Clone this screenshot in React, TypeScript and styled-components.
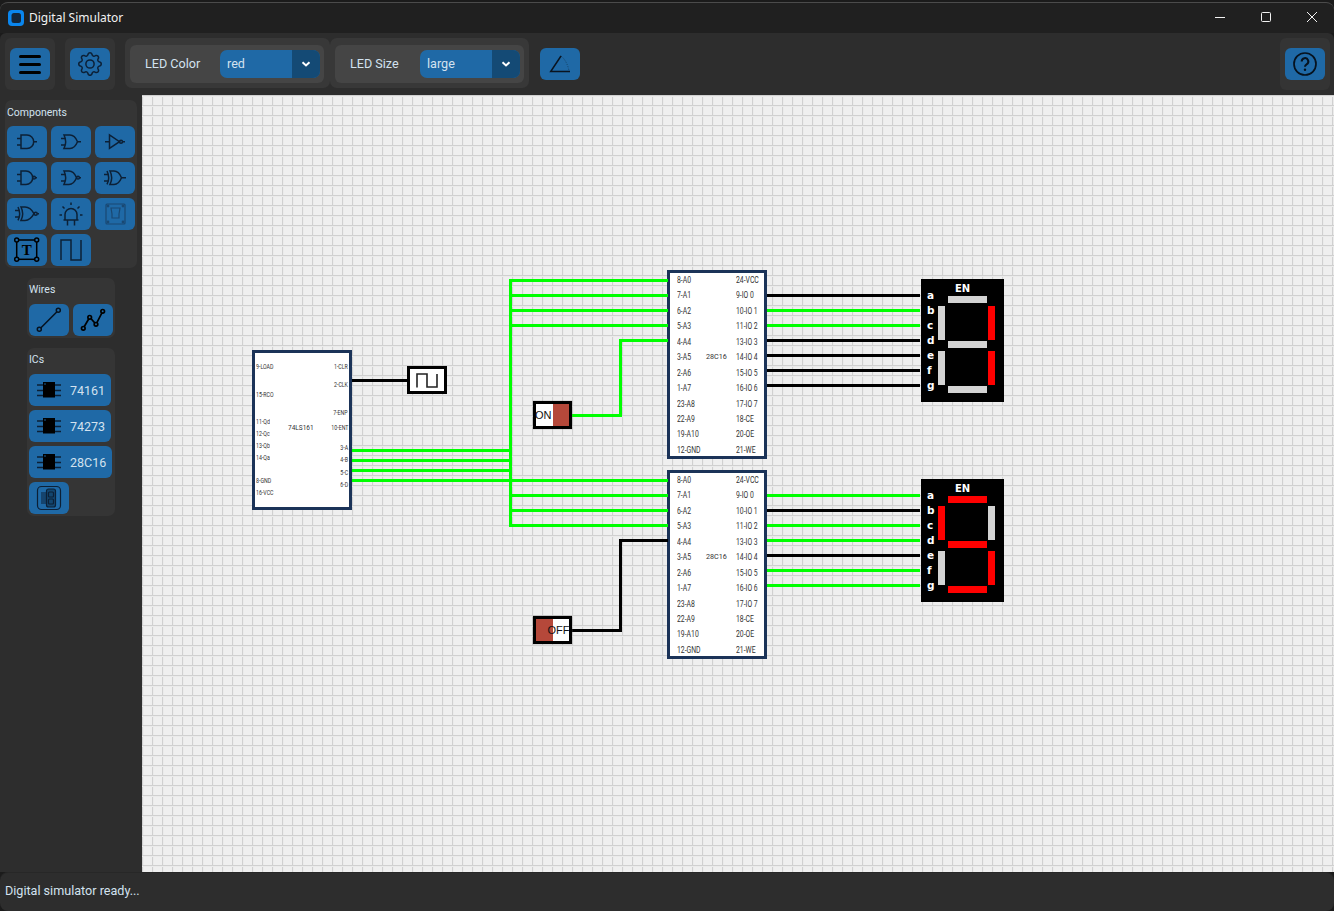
import React from 'react';
import styled, { createGlobalStyle } from 'styled-components';
import { BsGear } from 'react-icons/bs';

const ORIGIN_X = 142;
const ORIGIN_Y = 95;
const ICON = '#0c2036';
const GREEN = '#00ff00';

const GlobalStyle = createGlobalStyle`
  html, body, #root { margin: 0; padding: 0; height: 100%; background: #1b1b1b; overflow: hidden; }
  * { box-sizing: border-box; }
`;

const Win = styled.div`
  width: 1334px;
  height: 911px;
  display: flex;
  flex-direction: column;
  font-family: Roboto, "Liberation Sans", sans-serif;
  color: #d3e2ef;
  padding-top: 2px;
`;

const TitleBar = styled.div`
  height: 31px;
  flex: none;
  display: flex;
  align-items: center;
  padding: 0 0 1px 8px;
  background: #202020;
  border-top: 1px solid #4b4b4b;
  border-radius: 8px 8px 0 0;
  font-family: "Noto Sans", sans-serif;
  font-size: 12px;
  color: #f2f2f2;
`;

const AppTitle = styled.span`
  margin: 0 0 1px 5px;
`;

const WinControls = styled.div`
  margin: 0 -1px 1px auto;
  display: flex;
  height: 100%;
`;

const WinControl = styled.div`
  width: 46px;
  display: flex;
  align-items: center;
  justify-content: center;
`;

const ToolBar = styled.div`
  height: 62px;
  flex: none;
  display: flex;
  align-items: flex-start;
  padding: 5px 4px 0 5px;
  background: #2d2d2d;
  border-radius: 6px 6px 0 0;
`;

const ToolGroup = styled.div`
  width: 50px;
  height: 52px;
  margin-right: 10px;
  display: flex;
  align-items: center;
  justify-content: center;
  border-radius: 6px;
  background: #343434;
`;

const HelpGroup = styled(ToolGroup)`
  margin: 0 0 0 auto;
`;

const SettingOuter = styled.div<{ $w: number }>`
  width: ${p => p.$w}px;
  height: 50px;
  padding: 7px 0 5px 5px;
  border-radius: 7px;
  background: #383838;
`;

const SettingInner = styled.div<{ $w: number }>`
  width: ${p => p.$w}px;
  height: 38px;
  display: flex;
  align-items: center;
  padding-left: 15px;
  border-radius: 6px;
  background: #454545;
`;

const SettingLabel = styled.span<{ $w: number }>`
  width: ${p => p.$w}px;
  padding-bottom: 2px;
  font-size: 12.6px;
`;

const Select = styled.div`
  width: 100px;
  height: 28px;
  display: flex;
  align-items: center;
  padding-left: 7px;
  border-radius: 7px;
  overflow: hidden;
  background: #1f69a6;
  font-size: 12.6px;
`;

const SelectValue = styled.span`
  flex: 1;
  padding-bottom: 2px;
`;

const SelectArrow = styled.span`
  width: 28px;
  height: 28px;
  display: flex;
  align-items: center;
  justify-content: center;
  background: #144a75;
`;

const IconBtn = styled.div`
  width: 40px;
  height: 32px;
  flex: none;
  display: flex;
  align-items: center;
  justify-content: center;
  border-radius: 6px;
  background: #1f69a6;
  color: ${ICON};
  svg { display: block; }
`;

const AngleBtn = styled(IconBtn)`
  margin: 10px 0 0 11px;
`;

const Burger = styled.div`
  width: 22px;
  display: flex;
  flex-direction: column;
  gap: 5px;
`;

const BurgerBar = styled.span`
  height: 3px;
  border-radius: 2px;
  background: #000;
`;

const Main = styled.div`
  flex: 1;
  min-height: 0;
  display: flex;
`;

const SideBar = styled.div`
  width: 142px;
  flex: none;
  display: flex;
  flex-direction: column;
  align-items: flex-start;
  gap: 10px;
  padding-top: 5px;
  background: #2d2d2d;
`;

const Panel = styled.div<{ $w: number; $ml: number }>`
  width: ${p => p.$w}px;
  margin-left: ${p => p.$ml}px;
  padding: 0 2px 2px;
  border-radius: 7px;
  background: #353535;
`;

const PanelTitle = styled.div`
  height: 26px;
  line-height: 24px;
  font-size: 10.5px;
`;

const ComponentsTitle = styled(PanelTitle)`
  line-height: 25px;
`;

const PanelGrid = styled.div`
  display: grid;
  grid-template-columns: repeat(3, 40px);
  gap: 4px;
`;

const PanelRow = styled.div`
  display: flex;
  gap: 4px;
`;

const PanelColumn = styled.div`
  display: flex;
  flex-direction: column;
  align-items: flex-start;
  gap: 4px;
`;

const IcBtn = styled.div`
  height: 32px;
  display: flex;
  align-items: center;
  padding-right: 6px;
  border-radius: 6px;
  background: #1f69a6;
  font-size: 12.5px;
`;

const Canvas = styled.div`
  position: relative;
  flex: 1;
  overflow: hidden;
  background-color: #efefef;
  background-image:
    linear-gradient(#d0d0d0 1px, #ebebeb 1px, #ebebeb 2px, transparent 2px),
    linear-gradient(90deg, #d0d0d0 1px, #ebebeb 1px, #ebebeb 2px, transparent 2px);
  background-size: 10px 10px;
`;

const WireLayer = styled.svg`
  position: absolute;
  left: 0;
  top: 0;
`;

const Chip = styled.div<{ $x: number; $y: number; $h: number }>`
  position: absolute;
  left: ${p => p.$x - ORIGIN_X}px;
  top: ${p => p.$y - ORIGIN_Y}px;
  width: 100px;
  height: ${p => p.$h}px;
  background: #fff;
  border: 3px solid #1b3358;
  color: #333;
  font-family: Roboto, sans-serif;
`;

const RomGrid = styled.div`
  display: grid;
  grid-template-columns: 29px 30px 1fr;
  grid-auto-rows: 15.45px;
  padding: 0 0 0 7px;
  font-size: 9px;
  line-height: 14.5px;
  white-space: nowrap;
`;

const RomCell = styled.span<{ $col: number; $row: number }>`
  grid-column: ${p => p.$col};
  grid-row: ${p => p.$row};
  transform: scaleX(0.76);
  transform-origin: left center;
`;

const RomName = styled.span`
  grid-column: 2;
  grid-row: 6;
  font-size: 7.2px;
`;

const PinLabel = styled.span<{ $top: number; $right?: boolean }>`
  position: absolute;
  top: ${p => p.$top - 3}px;
  ${p => (p.$right ? 'right: 1px;' : 'left: 1px;')}
  transform: scaleX(0.7);
  transform-origin: ${p => (p.$right ? 'right' : 'left')} center;
  font-size: 7.5px;
  line-height: 7px;
  white-space: nowrap;
`;

const CounterName = styled.span`
  position: absolute;
  left: 33px;
  top: 71px;
  font-size: 6.5px;
  line-height: 8px;
`;

const ClockBox = styled.div`
  position: absolute;
  left: ${407 - ORIGIN_X}px;
  top: ${366 - ORIGIN_Y}px;
  width: 40px;
  height: 28px;
  display: flex;
  align-items: center;
  justify-content: center;
  background: #fff;
  border: 3px solid #000;
`;

const Toggle = styled.div<{ $y: number; $on: boolean }>`
  position: absolute;
  left: ${533 - ORIGIN_X}px;
  top: ${p => p.$y - ORIGIN_Y}px;
  width: 39px;
  height: 28px;
  display: flex;
  flex-direction: ${p => (p.$on ? 'row' : 'row-reverse')};
  border: 3px solid #000;
  box-shadow: 0 0 1px #777;
  background: #fff;
  font-family: "Liberation Sans", sans-serif;
  font-size: 11px;
  color: #111;
`;

const ToggleHalf = styled.span<{ $fill?: boolean }>`
  flex: 1;
  display: flex;
  align-items: center;
  position: relative;
  background: ${p => (p.$fill ? '#b5483a' : '#fff')};
`;

const ToggleText = styled.span<{ $left: number }>`
  position: absolute;
  z-index: 1;
  left: ${p => p.$left}px;
`;

const Display = styled.div<{ $y: number }>`
  position: absolute;
  left: ${921 - ORIGIN_X}px;
  top: ${p => p.$y - ORIGIN_Y}px;
  width: 83px;
  height: 123px;
  background: #000;
  color: #fff;
  font-family: "DejaVu Sans", sans-serif;
  font-weight: 700;
`;

const DisplayTitle = styled.span`
  position: absolute;
  left: 34px;
  top: 4px;
  font-size: 10px;
  line-height: 12px;
`;

const SegmentLabels = styled.div`
  position: absolute;
  left: 6px;
  top: 9px;
  display: flex;
  flex-direction: column;
  font-size: 10.5px;
  line-height: 15px;
`;

const Segments = styled.svg`
  position: absolute;
  left: 0;
  top: 0;
`;

const StatusBar = styled.div`
  height: 39px;
  flex: none;
  display: flex;
  align-items: center;
  padding: 0 0 3px 5px;
  background: #2d2d2d;
  border-top: 1px solid #272727;
  border-radius: 8px;
  font-size: 12.6px;
`;

const Gate = ({ children }: { children: React.ReactNode }) => (
  <svg width="40" height="32" viewBox="0 0 40 32" fill="none" stroke={ICON} strokeWidth="1.5">
    {children}
  </svg>
);

const AND = 'M14 9h6a6.7 6.7 0 0 1 0 13.4h-6z';
const OR = 'M13 9h6c3.5 0 6 3 7.5 6.7-1.5 3.7-4 6.7-7.5 6.7h-6c2-4 2-9.4 0-13.4z';
const STUBS = 'M10 12.5h4M10 19h4';

const GATES = [
  <Gate key="and"><path d={AND} /><path d={`${STUBS}M26.7 15.7H30`} /></Gate>,
  <Gate key="or"><path d={OR} /><path d={`${STUBS}M26.5 15.7H30`} /></Gate>,
  <Gate key="not"><path d="M14.5 9v13.4l10-6.7z" /><circle cx="26" cy="15.7" r="1.5" /><path d="M10 15.7h4.500M27.500 15.7H30" /></Gate>,
  <Gate key="nand"><path d="M14 9h5a6.700 6.700 0 0 1 0 13.400h-5z" /><circle cx="27" cy="15.700" r="1.400" /><path d={STUBS} /><path d="M28.400 15.700H30" /></Gate>,
  <Gate key="nor"><path d="M13 9h5c3.500 0 6 3 7.500 6.700-1.500 3.700-4 6.700-7.500 6.700h-5c2-4 2-9.400 0-13.400z" /><circle cx="27" cy="15.700" r="1.400" /><path d={STUBS} /><path d="M28.400 15.700H30" /></Gate>,
  <Gate key="xor"><path d="M15 9h4c3.500 0 6 3 7.500 6.700-1.500 3.700-4 6.700-7.500 6.700h-4c2-4 2-9.400 0-13.400z" /><path d="M12 9c2 4 2 9.400 0 13.400" /><path d="M9 12.500h4.500M9 19h4.500M26.500 15.700H31" /></Gate>,
  <Gate key="xnor"><path d="M14 9h4c4 0 7 3 9 6.700-2 3.700-5 6.700-9 6.700h-4c2-4 2-9.400 0-13.400z" /><path d="M11 9c2 4 2 9.400 0 13.400" /><circle cx="28.700" cy="15.700" r="1.500" /><path d="M8 12.500h4.500M8 19h4.500M30.200 15.700H32" /></Gate>,
  <Gate key="led"><path d="M14 22v-5.500a6 6 0 0 1 12 0V22zM12.500 22h15M16.500 22v5.500M23.500 22v5.500M8.500 17h2.500M29 17h2.500M11.500 8.500l2 2M28.500 8.500l-2 2M20 4.500v2.500" /></Gate>,
  <Gate key="switch">
    <g stroke="#1a4872" strokeWidth="1.200"><rect x="11" y="6" width="19" height="20" rx="1" /><path d="M16 10h9l-1 6v4h-7v-4z" /><circle cx="13" cy="8" r=".8" /><circle cx="28" cy="8" r=".8" /><circle cx="13" cy="24" r=".8" /><circle cx="28" cy="24" r=".8" /></g>
  </Gate>,
  <Gate key="text">
    <rect x="9.700" y="6" width="20" height="19.300" stroke="#000" />
    <g stroke="#000" fill="#1f69a6"><circle cx="9.700" cy="6" r="2" /><circle cx="29.700" cy="6" r="2" /><circle cx="9.700" cy="25.300" r="2" /><circle cx="29.700" cy="25.300" r="2" /></g>
    <text x="19.700" y="21" textAnchor="middle" fill="#000" stroke="none" fontFamily="Liberation Serif, serif" fontWeight="700" fontSize="15">T</text>
  </Gate>,
  <Gate key="clock"><path d="M10 26V6h10v20h10V6" /></Gate>,
];

const ChipIcon = () => (
  <svg width="41" height="32" viewBox="0 0 41 32" fill="none">
    <path d="M8 11h6M8 16.500h6M8 21.500h6M26 11h6M26 16.500h6M26 21.500h6" stroke={ICON} strokeWidth="1.600" />
    <rect x="14" y="8" width="12" height="15.500" fill="#000" />
    <circle cx="16" cy="10" r=".8" fill="#1f69a6" />
  </svg>
);

const DisplayChipIcon = () => (
  <svg width="40" height="32" viewBox="0 0 40 32" fill="none" stroke={ICON} strokeWidth="1.200">
    <rect x="8.500" y="4.500" width="23" height="23" rx="4" />
    <path d="M12 11h5M12 13h5M12 15h5M12 17h5M12 19h5M12 21h5" />
    <rect x="17.500" y="7" width="9" height="18" rx="2" fill="#13466f" />
    <rect x="19.500" y="10" width="5" height="5" rx="1" />
    <rect x="19.500" y="17" width="5" height="5" rx="1" />
  </svg>
);

const Chevron = () => (
  <svg width="10" height="8" viewBox="0 0 10 8" fill="none" stroke="#fff" strokeWidth="2">
    <path d="M1.500 2.300 5 5.500l3.500-3.200" />
  </svg>
);

const COUNTER_LEFT: [string, number][] = [
  ['9-LOAD', 13], ['15-RCO', 41], ['11-Qd', 68], ['12-Qc', 80], ['13-Qb', 92], ['14-Qa', 104], ['8-GND', 127], ['16-VCC', 139],
];
const COUNTER_RIGHT: [string, number][] = [
  ['1-CLR', 13], ['2-CLK', 31], ['7-ENP', 59], ['10-ENT', 74], ['3-A', 94], ['4-B', 106], ['5-C', 119], ['6-D', 131],
];
const ROM_LEFT = ['8-A0', '7-A1', '6-A2', '5-A3', '4-A4', '3-A5', '2-A6', '1-A7', '23-A8', '22-A9', '19-A10', '12-GND'];
const ROM_RIGHT = ['24-VCC', '9-IO 0', '10-IO 1', '11-IO 2', '13-IO 3', '14-IO 4', '15-IO 5', '16-IO 6', '17-IO 7', '18-CE', '20-OE', '21-WE'];

const Rom = ({ y }: { y: number }) => (
  <Chip $x={667} $y={y} $h={189}>
    <RomGrid>
      {ROM_LEFT.map((l, i) => (
        <React.Fragment key={l}>
          <RomCell $col={1} $row={i + 1}>{l}</RomCell>
          <RomCell $col={3} $row={i + 1}>{ROM_RIGHT[i]}</RomCell>
        </React.Fragment>
      ))}
      <RomName>28C16</RomName>
    </RomGrid>
  </Chip>
);

// order: top, upper right, lower right, bottom, lower left, upper left, middle
const SEG_RECTS = [
  [27, 17, 39, 7], [67, 27, 7, 34], [67, 72, 7, 34], [27, 107, 39, 7], [17, 72, 7, 34], [17, 27, 7, 34], [27, 62, 39, 7],
];

const SevenSeg = ({ y, lit }: { y: number; lit: boolean[] }) => (
  <Display $y={y}>
    <DisplayTitle>EN</DisplayTitle>
    <SegmentLabels>
      {['a', 'b', 'c', 'd', 'e', 'f', 'g'].map(c => <span key={c}>{c}</span>)}
    </SegmentLabels>
    <Segments width="83" height="123">
      {SEG_RECTS.map((r, i) => (
        <rect key={i} x={r[0]} y={r[1]} width={r[2]} height={r[3]} fill={lit[i] ? '#ff0000' : '#d3d3d3'} />
      ))}
    </Segments>
  </Display>
);

type Wire = { d: string; on: boolean };

const outputRows = (top: number, states: boolean[]): Wire[] =>
  states.map((on, i) => ({ d: `M767 ${top + i * 15}H920`, on }));

const WIRES: Wire[] = [
  { d: 'M352 380.500H408', on: false },
  ...[450.5, 460.5, 470.5, 480.5].map(y => ({ d: `M352 ${y}H511`, on: true })),
  { d: 'M510.500 279V527', on: true },
  ...[280.5, 295.5, 310.5, 325.5, 480.5, 495.5, 510.5, 525.5].map(y => ({ d: `M510 ${y}H668`, on: true })),
  { d: 'M572 415.500H620.500V340.500H668', on: true },
  { d: 'M572 630.500H620.500V540.500H668', on: false },
  ...outputRows(295.5, [false, true, true, false, false, false, false]),
  ...outputRows(495.5, [true, false, true, true, false, true, true]),
];

export default function App() {
  return (
    <Win>
      <GlobalStyle />
      <TitleBar>
        <svg width="16" height="16" viewBox="0 0 16 16">
          <rect width="16" height="16" rx="4" fill="#0a86ee" />
          <rect x="3.500" y="3" width="9.500" height="10" rx="2.500" fill="#14263a" />
        </svg>
        <AppTitle>Digital Simulator</AppTitle>
        <WinControls>
          <WinControl>
            <svg width="10" height="10" stroke="#f2f2f2"><path d="M0 5.500h10" /></svg>
          </WinControl>
          <WinControl>
            <svg width="10" height="10" fill="none" stroke="#f2f2f2"><rect x=".5" y=".5" width="9" height="9" rx="1" /></svg>
          </WinControl>
          <WinControl>
            <svg width="10" height="10" stroke="#f2f2f2"><path d="M0 0l10 10M10 0 0 10" /></svg>
          </WinControl>
        </WinControls>
      </TitleBar>
      <ToolBar>
        <ToolGroup>
          <IconBtn>
            <Burger><BurgerBar /><BurgerBar /><BurgerBar /></Burger>
          </IconBtn>
        </ToolGroup>
        <ToolGroup>
          <IconBtn><BsGear size={24} /></IconBtn>
        </ToolGroup>
        <SettingOuter $w={205}>
          <SettingInner $w={194}>
            <SettingLabel $w={75}>LED Color</SettingLabel>
            <Select>
              <SelectValue>red</SelectValue>
              <SelectArrow><Chevron /></SelectArrow>
            </Select>
          </SettingInner>
        </SettingOuter>
        <SettingOuter $w={199}>
          <SettingInner $w={189}>
            <SettingLabel $w={70}>LED Size</SettingLabel>
            <Select>
              <SelectValue>large</SelectValue>
              <SelectArrow><Chevron /></SelectArrow>
            </Select>
          </SettingInner>
        </SettingOuter>
        <AngleBtn>
          <svg width="40" height="32" viewBox="0 0 40 32" fill="none" stroke="#0a1420">
            <path d="M21 8 10.700 23.500H30" strokeWidth="1.500" />
            <path d="M21 8c4 3 7 9 8 15" strokeWidth=".7" strokeDasharray="1 1.500" opacity=".7" />
          </svg>
        </AngleBtn>
        <HelpGroup>
          <IconBtn>
            <svg width="26" height="26" viewBox="0 0 26 26" fill="none" stroke="#06121e">
              <circle cx="13" cy="13" r="11" strokeWidth="1.700" />
              <path d="M9.700 10.500a3.300 3.300 0 1 1 4.900 2.800c-1 .6-1.600 1.200-1.600 2.400" strokeWidth="2" />
              <circle cx="13" cy="18.800" r="1.200" fill="#06121e" stroke="none" />
            </svg>
          </IconBtn>
        </HelpGroup>
      </ToolBar>
      <Main>
        <SideBar>
          <Panel $w={132} $ml={5}>
            <ComponentsTitle>Components</ComponentsTitle>
            <PanelGrid>
              {GATES.map(g => <IconBtn key={g.key}>{g}</IconBtn>)}
            </PanelGrid>
          </Panel>
          <Panel $w={88} $ml={27}>
            <PanelTitle>Wires</PanelTitle>
            <PanelRow>
              <IconBtn>
                <Gate>
                  <path d="M11.700 24 28 7.700" stroke="#06121e" />
                  <circle cx="10.300" cy="25.300" r="2" stroke="#06121e" />
                  <circle cx="29.300" cy="6.300" r="2" stroke="#06121e" />
                </Gate>
              </IconBtn>
              <IconBtn>
                <Gate>
                  <path d="M10.300 24.300 16.700 13.300 23 20.300 29.700 7.300" stroke="#000" strokeWidth="1.700" />
                  <g fill="#1f69a6" stroke="#000" strokeWidth="1.700">
                    <circle cx="10.300" cy="24.300" r="1.800" />
                    <circle cx="16.700" cy="13.300" r="1.800" />
                    <circle cx="23" cy="20.300" r="1.800" />
                    <circle cx="29.700" cy="7.300" r="1.800" />
                  </g>
                </Gate>
              </IconBtn>
            </PanelRow>
          </Panel>
          <Panel $w={88} $ml={27}>
            <PanelTitle>ICs</PanelTitle>
            <PanelColumn>
              {['74161', '74273', '28C16'].map(n => (
                <IcBtn key={n}><ChipIcon />{n}</IcBtn>
              ))}
              <IconBtn><DisplayChipIcon /></IconBtn>
            </PanelColumn>
          </Panel>
        </SideBar>
        <Canvas>
          <Chip $x={252} $y={350} $h={160}>
            {COUNTER_LEFT.map(([l, t]) => <PinLabel key={l} $top={t}>{l}</PinLabel>)}
            {COUNTER_RIGHT.map(([l, t]) => <PinLabel key={l} $top={t} $right>{l}</PinLabel>)}
            <CounterName>74LS161</CounterName>
          </Chip>
          <Rom y={270} />
          <Rom y={470} />
          <WireLayer width="1192" height="777" viewBox={`${ORIGIN_X} ${ORIGIN_Y} 1192 777`} fill="none" strokeWidth="3">
            {WIRES.map((w, i) => <path key={i} d={w.d} stroke={w.on ? GREEN : '#000'} />)}
          </WireLayer>
          <ClockBox>
            <svg width="22" height="15" fill="none" stroke="#222" strokeWidth="1.600">
              <path d="M1 14.500V1h10v13h10V1" />
            </svg>
          </ClockBox>
          <Toggle $y={401} $on>
            <ToggleHalf><ToggleText $left={-1}>ON</ToggleText></ToggleHalf>
            <ToggleHalf $fill />
          </Toggle>
          <Toggle $y={616} $on={false}>
            <ToggleHalf><ToggleText $left={-5}>OFF</ToggleText></ToggleHalf>
            <ToggleHalf $fill />
          </Toggle>
          <SevenSeg y={279} lit={[false, true, true, false, false, false, false]} />
          <SevenSeg y={479} lit={[true, false, true, true, false, true, true]} />
        </Canvas>
      </Main>
      <StatusBar>Digital simulator ready...</StatusBar>
    </Win>
  );
}
